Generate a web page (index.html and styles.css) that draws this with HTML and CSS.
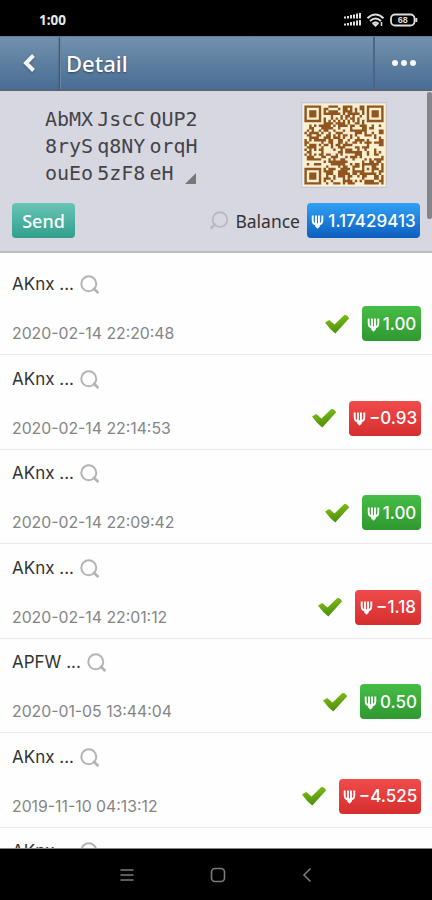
FILE: index.html
```
<!DOCTYPE html>
<html lang="en">
<head>
<meta charset="utf-8">
<title>Detail</title>
<link rel="stylesheet" href="styles.css">
</head>
<body>
<svg class="defs" aria-hidden="true">
  <defs>
    <linearGradient id="leaf" x1="0" y1="0" x2=".3" y2="1"><stop offset="0" stop-color="#8ac819"/><stop offset="1" stop-color="#4b8f0c"/></linearGradient>
    <symbol id="check" viewBox="0 0 26 20"><path fill="url(#leaf)" d="M1 8.600 5.300 6.100 10.500 10.400 20.600.800Q23.500 1.300 25.200 4.200L11.300 19.400Q5.500 15.200 1 8.600Z"/></symbol>
    <symbol id="search" viewBox="0 0 20 20"><circle cx="9" cy="9" r="7.7" fill="none" stroke="currentColor" stroke-width="2"/><path d="m14.300 14.200 3.700 3.500" stroke="currentColor" stroke-width="2.800" stroke-linecap="round"/></symbol>
    <symbol id="psi" viewBox="0 0 13 15"><path d="M1.700 1.500v4.700c0 3 1.800 4.300 4.800 4.300s4.800-1.300 4.800-4.300V1.500M5 1.500v9M8 1.500v9" fill="none" stroke="currentColor" stroke-width="1.900"/><path d="M4.200 9.500h4.600v3L6.500 14.800 4.200 12.500z" fill="currentColor"/></symbol>
  </defs>
</svg>

<div class="status">
  <span class="clock">1:00</span>
  <svg width="74" height="16" viewBox="0 0 74 16" fill="none" stroke="#ddd">
    <path d="M1 6.500V4.500M4 6.500V4M7 6.500V3M10 6.500V2.500M13 6.500V1.500M16 6.500V1M1 13.500v-2M4 13.500V11M7 13.500V10M10 13.500V9.500M13 13.500V8.500M16 13.500V8" stroke-width="2"/>
    <path d="M23.500 6.200q8-7.400 16 0M26 9q5.500-5 11 0M28.700 11.500q2.800-2.500 5.600 0" stroke-width="2"/>
    <path d="m29.500 12 2 2 2-2zM37.500 10v4" fill="#ddd" stroke-width="1.500"/>
    <rect x="47" y="2.500" width="23.500" height="11" rx="4" stroke-width="1.800"/>
    <path d="M72.300 6v4" stroke-width="2"/>
    <text x="58.700" y="11.400" text-anchor="middle" class="level">68</text>
  </svg>
</div>

<header class="bar">
  <div class="back"><svg width="14" height="18" viewBox="0 0 14 18"><path d="M11.500 1.500 4 9l7.500 7.500" fill="none" stroke="#f4f4f4" stroke-width="4"/></svg></div>
  <h1>Detail</h1>
  <div class="more"><i></i><i></i><i></i></div>
</header>

<section class="account">
  <div class="top">
    <p class="address">AbMX JscC QUP2<br>8ryS q8NY orqH<br>ouEo 5zF8 eH<svg width="11" height="11" viewBox="0 0 11 11"><path d="M11 0v11H0z" fill="#777"/></svg></p>
    <svg class="qr" id="qr" viewBox="-1 -1 35 35"></svg>
  </div>
  <div class="bottom">
    <span class="pill teal">Send</span>
    <svg class="lens" width="20" height="19" viewBox="0 0 20 20"><use href="#search"/></svg>
    <span class="label">Balance</span>
    <span class="pill blue"><svg class="psi"><use href="#psi"/></svg><b>1.17429413</b></span>
  </div>
  <span class="scroll"></span>
</section>

<main id="list"></main>

<nav class="nav">
  <svg width="14" height="14" viewBox="0 0 14 14"><path d="M.5 2h13M.5 7h13M.5 12h13"/></svg>
  <svg width="16" height="16" viewBox="0 0 16 16"><rect x="1.500" y="1.500" width="13" height="13" rx="3.500"/></svg>
  <svg width="10" height="16" viewBox="0 0 10 16"><path d="M8.500 1.500 2 8l6.500 6.500"/></svg>
</nav>
<script src="app.js"></script>
</body>
</html>
```
FILE: styles.css
```
* { box-sizing: border-box; }
body { margin: 0; height: 900px; overflow: hidden; display: flex; flex-direction: column; background: #fefefe; font-family: Inter, "Liberation Sans", sans-serif; color: #333; }
.defs { position: absolute; width: 0; height: 0; }
.status { flex: none; height: 36px; padding: 4px 14px 0 39px; background: #000; color: #e8e8e8; display: flex; align-items: center; justify-content: space-between; }
.clock { font: 700 13.5px/16px "Noto Sans", sans-serif; }
.level { font: 700 9px "Liberation Sans", sans-serif; fill: #ddd; stroke: none; }
.bar { flex: none; height: 55px; display: flex; background: linear-gradient(#7391b0, #5e7f9f 50%, #486d96); border-bottom: 2px solid #5b6579; border-top: 1px solid #637a94; }
.back { width: 60px; padding-right: 2px; border-right: 1px solid #3d5775; display: flex; align-items: center; justify-content: center; filter: drop-shadow(0 1px 1px #3d5775); }
.bar h1 { flex: 1; margin: 0; padding-left: 5px; font: 500 22px/53px "Noto Sans", sans-serif; color: #fff; text-shadow: 0 1px 2px #30475f; border-left: 1px solid #7f99b4; }
.more { width: 59px; border-left: 2px solid #4a6684; display: flex; align-items: center; justify-content: center; gap: 3px; padding-left: 1px; }
.more i { width: 6px; height: 6px; border-radius: 50%; background: #f5f5f5; }
.account { position: relative; flex: none; height: 162px; background: #d7d7e1; border-bottom: 2px solid #bcbcbf; }
.top { display: flex; justify-content: space-between; height: 107px; padding: 11px 45px 0 45px; }
.address { margin: 4px 0 0; font: 20px/27px "DejaVu Sans Mono", monospace; word-spacing: -8px; color: #444448; white-space: nowrap; }
.address svg { margin-left: 11px; vertical-align: -4px; }
.qr { width: 86px; height: 86px; background: #fbf0d2; border: 1px solid #c9c9cc; outline: 1px solid #e2e2e6; outline-offset: -2px; }
.bottom { display: flex; align-items: center; padding: 5px 12px 0 12px; }
.pill { height: 35px; border-radius: 4px; display: inline-flex; align-items: center; justify-content: center; color: #fff; flex: none; }
.pill b { font-weight: 450; }
.psi { width: 13px; height: 15px; flex: none; margin-top: 1px; }
.teal { width: 63px; font: 500 18px "Noto Sans", sans-serif; background: linear-gradient(#69c4b6, #319f8c); }
.lens { margin-left: auto; color: #b9b9c1; transform: scaleX(-1); }
.label { margin: 0 7px 0 6px; font: 17.5px "Noto Sans", sans-serif; }
.blue { width: 113px; font-size: 17px; background: linear-gradient(#30a1f5, #0d5ebf); gap: 4px; }
.scroll { position: absolute; right: 0; top: 1px; width: 5px; height: 127px; border-radius: 2px; background: #858589; }
main { flex: 1; min-height: 0; overflow: hidden; padding-top: 7.5px; border-bottom: 1px solid #888; }
.row { height: 94.5px; padding: 11.500px 11px 0 12px; border-bottom: 1px solid #e9e9e9; }
.who { display: flex; align-items: center; gap: 6px; height: 24px; font-size: 17px; color: #333; }
.who svg { width: 19.500px; height: 19.500px; margin-top: 2px; color: #b4b4b4; }
.info { display: flex; align-items: center; height: 35px; margin-top: 10px; }
time { flex: 1; font-size: 15.800px; color: #858585; padding-top: 20px; }
.check { width: 26px; height: 20px; margin-right: 12px; }
.amount { font-size: 17px; gap: 3px; }
.green { background: linear-gradient(#46bd46, #2f9830); }
.red { background: linear-gradient(#f04b4b, #d62e2e); }
.nav { flex: none; height: 51px; padding-right: 1px; background: #000; display: flex; align-items: center; justify-content: center; gap: 76px; }
.nav svg { fill: none; stroke: #7b7b7b; stroke-width: 1.6; }
```
FILE: app.js
```
const rows = [
  ["AKnx ...", "2020-02-14 22:20:48", "1.00", 59],
  ["AKnx ...", "2020-02-14 22:14:53", "−0.93", 72],
  ["AKnx ...", "2020-02-14 22:09:42", "1.00", 59],
  ["AKnx ...", "2020-02-14 22:01:12", "−1.18", 66],
  ["APFW ...", "2020-01-05 13:44:04", "0.50", 61],
  ["AKnx ...", "2019-11-10 04:13:12", "−4.525", 82],
  ["AKnx ..."]
];
const info = (time, amount, width) => `
    <div class="info"><time>${time}</time><svg class="check"><use href="#check"/></svg>
      <span class="pill amount ${amount[0] === "−" ? "red" : "green"}" style="width:${width}px"><svg class="psi"><use href="#psi"/></svg><b>${amount}</b></span></div>`;
document.getElementById("list").innerHTML = rows.map(([who, time, amount, width]) => `
  <article class="row">
    <div class="who"><span>${who}</span><svg><use href="#search"/></svg></div>${time ? info(time, amount, width) : ""}
  </article>`).join("");

// 33-module code: three finders, one alignment mark, data in between.
const N = 33;
let seed = 90210;
const bit = () => {
  seed ^= seed << 13; seed ^= seed >>> 17; seed ^= seed << 5;
  return (seed >>> 0) / 4294967296 < 0.51;
};
const ring = (x, y, cx, cy) => Math.max(Math.abs(x - cx), Math.abs(y - cy));
let path = "";
for (let y = 0; y < N; y++) for (let x = 0; x < N; x++) {
  let dark = bit();
  if (x === 6 || y === 6) dark = (x + y) % 2 === 0;
  if (ring(x, y, 26, 26) < 3) dark = ring(x, y, 26, 26) !== 1;
  for (const [cx, cy] of [[3, 3], [29, 3], [3, 29]]) {
    const r = ring(x, y, cx, cy);
    if (r < 5) dark = r < 2 || r === 3;
  }
  if (dark) path += `M${x} ${y}h1v1h-1z`;
}
document.getElementById("qr").innerHTML = `<path fill="#91551f" d="${path}"/>`;
```
